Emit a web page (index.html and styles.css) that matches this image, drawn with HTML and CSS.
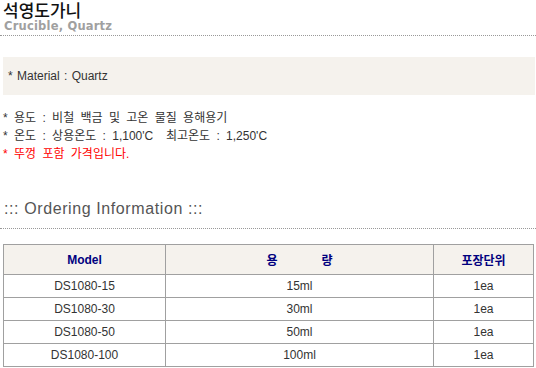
FILE: index.html
```html
<!DOCTYPE html>
<html lang="ko">
<head>
<meta charset="utf-8">
<link rel="stylesheet" href="styles.css">
</head>
<body>
<div class="page">
  <h1 class="title">석영도가니</h1>
  <div class="subtitle">Crucible, Quartz</div>
  <div class="dots"></div>
  <div class="material">* Material : Quartz</div>
  <div class="specs">
    <div>* 용도 : 비철 백금 및 고온 물질 용해용기</div>
    <div>* 온도 : 상용온도 : 1,100'C&nbsp; 최고온도 : 1,250'C</div>
    <div class="red">* 뚜껑 포함 가격입니다.</div>
  </div>
  <h2 class="section">::: Ordering Information :::</h2>
  <div class="dots dots-section"></div>
  <table class="order">
    <colgroup><col class="c1"><col class="c2"><col class="c3"></colgroup>
    <thead>
      <tr><th>Model</th><th><span class="wide">용</span>량</th><th>포장단위</th></tr>
    </thead>
    <tbody>
      <tr><td>DS1080-15</td><td>15ml</td><td>1ea</td></tr>
      <tr><td>DS1080-30</td><td>30ml</td><td>1ea</td></tr>
      <tr><td>DS1080-50</td><td>50ml</td><td>1ea</td></tr>
      <tr><td>DS1080-100</td><td>100ml</td><td>1ea</td></tr>
    </tbody>
  </table>
</div>
</body>
</html>
```
FILE: styles.css
```css
html, body { margin: 0; padding: 0; background: #fff; }
body { font-family: "Liberation Sans", "Noto Sans CJK KR", sans-serif; font-size: 12px; color: #333; }
.page { width: 536px; }
.title { margin: 0; padding: 0 0 0 3px; font-family: "Noto Sans CJK KR", sans-serif; font-weight: 500; font-size: 17px; line-height: 20px; color: #111; }
.subtitle { padding-left: 4px; font-family: "DejaVu Sans", sans-serif; font-weight: bold; font-size: 11.5px; line-height: 13px; letter-spacing: 0.2px; color: #a0a0a0; }
.dots { border-top: 1px dotted #999; margin-top: 2px; }
.material { margin: 21px 1px 0 3px; height: 38px; background: #f5f2ed; display: flex; align-items: center; padding-left: 5px; color: #333; word-spacing: 1px; }
.specs { margin-top: 14px; padding-left: 3px; line-height: 18px; word-spacing: 3px; }
.red { color: #f00; }
.section { margin: 37px 0 0 4px; font-weight: normal; font-size: 16px; line-height: 18px; letter-spacing: 0.6px; color: #555; font-family: "Liberation Sans", sans-serif; }
.dots-section { margin-top: 10px; }
.order { margin: 15px 0 0 3px; width: 530px; border-collapse: collapse; table-layout: fixed; }
.c1 { width: 162px; }
.c2 { width: 268px; }
.c3 { width: 100px; }
.order th, .order td { border: 1px solid #a0a0a0; text-align: center; padding: 0; }
.order th { height: 29px; background: #f5f2ed; color: #00007f; font-weight: bold; font-size: 12px; }
.order td { height: 22px; color: #333; }
.wide { margin-right: 44px; }
```
